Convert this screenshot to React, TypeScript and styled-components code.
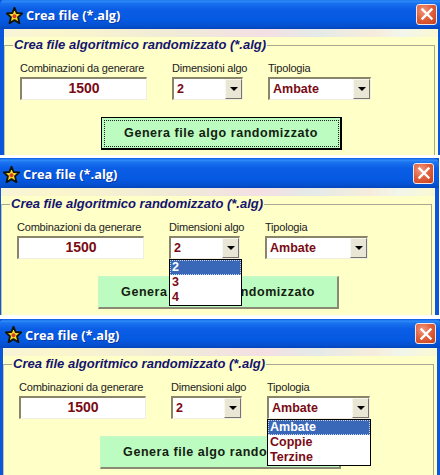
import React from "react";
import styled, { createGlobalStyle } from "styled-components";

const Global = createGlobalStyle`
  html, body { margin: 0; padding: 0; background: #fff; overflow: hidden; }
  body { width: 440px; height: 475px; font-family: "Liberation Sans", Arial, sans-serif; }
`;

const Page = styled.div`
  width: 440px;
  height: 475px;
  overflow: hidden;
`;

const Win = styled.section<{ $left: number; $top: number; $height: number }>`
  box-sizing: border-box;
  width: 442px;
  height: ${(p) => p.$height}px;
  margin: ${(p) => p.$top}px 0 0 ${(p) => p.$left}px;
  display: flex;
  flex-direction: column;
  background: #0a57dc;
`;

const TitleBar = styled.header<{ $h: number }>`
  flex: 0 0 ${(p) => p.$h}px;
  display: flex;
  align-items: center;
  box-sizing: border-box;
  padding: 2px 5px 0 6px;
  border-radius: 6px 6px 0 0;
  background: linear-gradient(
    180deg,
    #0a5ae6 0%,
    #2f8cf6 7%,
    #1a73f0 14%,
    #0a5de4 35%,
    #0559e2 70%,
    #0550cf 90%,
    #0445ba 100%
  );
`;

const StarIcon = styled.svg`
  width: 17px;
  height: 17px;
  flex: none;
`;

const Title = styled.h1`
  margin: 0 0 0 3px;
  flex: 1;
  color: #fff;
  font: bold 12.8px "Open Sans", "Liberation Sans", sans-serif;
  text-shadow: 1px 1px 0 #0a3aa8;
`;

const CloseBtn = styled.div`
  width: 21px;
  height: 21px;
  margin: -2px 0 0 0;
  box-sizing: border-box;
  border: 1px solid #f4e8e4;
  border-radius: 3px;
  background: radial-gradient(circle at 35% 30%, #ee9a80 0%, #e2623e 45%, #c63d1c 100%);
  display: flex;
  align-items: center;
  justify-content: center;
`;

const Body = styled.div`
  flex: 1;
  min-height: 0;
  margin: 0 0 0 4px;
  width: 434px;
  overflow: hidden;
  background: #ffffc8;
`;

const Stripe = styled.div`
  height: 8px;
  background: linear-gradient(
    90deg,
    #f8f4d8 0%,
    #fbf6cc 12%,
    #f0ead8 40%,
    #f4dfe4 60%,
    #e4eae8 72%,
    #f6ecdc 85%,
    #f2f6ec 92%,
    #fbf8d0 100%
  );
`;

const Group = styled.fieldset`
  margin: 0 3px 0 0;
  padding: 0;
  min-width: 0;
  height: 200px;
  border: 1px solid #a8a890;
  border-left-color: #c4c4a8;
`;

const Legend = styled.legend`
  margin-left: 8px;
  padding: 0 1px;
  height: 16px;
  color: #14146e;
  font: italic bold 13px/16px "Liberation Sans", sans-serif;
`;

const Fields = styled.div`
  display: grid;
  grid-template-columns: 127px 71px 103px;
  column-gap: 25px;
  margin: 8px 0 0 15px;
`;

const Field = styled.div`
  position: relative;
  min-width: 0;
`;

const Label = styled.label`
  display: block;
  height: 14px;
  margin-bottom: 2px;
  color: #222;
  font-size: 11px;
  letter-spacing: -0.2px;
  line-height: 14px;
  white-space: nowrap;
`;

const Sunken = styled.div`
  box-sizing: border-box;
  height: 23px;
  background: #fff;
  border-style: solid;
  border-width: 2px 1px 1px 2px;
  border-color: #8a8468 #efeee0 #efeee0 #8a8468;
`;

const NumberBox = styled(Sunken)`
  color: #7a0a14;
  font-size: 14px;
  font-weight: bold;
  line-height: 19px;
  text-align: center;
`;

const Combo = styled(Sunken)`
  display: flex;
  align-items: center;
  padding-left: 3px;
`;

const ComboText = styled.span`
  flex: 1;
  color: #7a0a14;
  font-size: 12.5px;
  font-weight: bold;
`;

const ArrowBtn = styled.div`
  box-sizing: border-box;
  flex: none;
  width: 17px;
  height: 20px;
  background: #e9e6d6;
  border-style: solid;
  border-width: 1px;
  border-color: #f8f8f0 #77756a #77756a #f8f8f0;
  display: flex;
  align-items: center;
  justify-content: center;
  &::after {
    content: "";
    border-style: solid;
    border-width: 4px 4px 0;
    border-color: #000 transparent transparent;
  }
`;

const Popup = styled.ul<{ $width: number }>`
  position: absolute;
  top: 39px;
  left: 0;
  z-index: 2;
  box-sizing: border-box;
  width: ${(p) => p.$width}px;
  height: 47px;
  margin: 0;
  padding: 0;
  list-style: none;
  background: #fff;
  border: 1px solid #000;
`;

const PopupItem = styled.li<{ $active?: boolean }>`
  box-sizing: border-box;
  height: 15px;
  padding-left: 2px;
  color: ${(p) => (p.$active ? "#fff" : "#7a0a14")};
  background: ${(p) => (p.$active ? "#3a68b8" : "transparent")};
  outline: ${(p) => (p.$active ? "1px dotted #c8d4ec" : "none")};
  outline-offset: -1px;
  font-size: 12.5px;
  font-weight: bold;
  line-height: 15px;
`;

const ActionBtn = styled.button<{ $focused?: boolean }>`
  display: block;
  box-sizing: border-box;
  width: 241px;
  height: 33px;
  margin: 17px 0 0 96px;
  padding: 0;
  background: #bcfcc0;
  color: #142010;
  font: bold 12.5px "Liberation Sans", sans-serif;
  letter-spacing: 0.55px;
  border-style: solid;
  border-width: 1px 2px 2px 1px;
  border-color: ${(p) =>
    p.$focused ? "#000" : "#c8f8c8 #8a8a74 #8a8a74 #c8f8c8"};
  outline: ${(p) => (p.$focused ? "1px dotted #222" : "none")};
  outline-offset: -4px;
`;

const Star = () => (
  <StarIcon viewBox="0 0 24 24">
    <polygon
      points="12,1 15,8.5 23,9 17,14.5 19,23 12,18.5 5,23 7,14.5 1,9 9,8.5"
      fill="#f7dc2a"
      stroke="#14140c"
      strokeWidth="2.6"
      strokeLinejoin="round"
    />
    <circle cx="12" cy="13" r="2.8" fill="#d8402a" />
  </StarIcon>
);

const CloseIcon = () => (
  <svg width="14" height="14" viewBox="0 0 14 14">
    <path d="M2.5 2.5 L11.5 11.5 M11.5 2.5 L2.5 11.5" stroke="#fff" strokeWidth="2.4" strokeLinecap="square" />
  </svg>
);

type Open = "dim" | "type" | null;

type WindowProps = {
  left: number;
  top: number;
  height: number;
  titleH: number;
  open: Open;
  focused?: boolean;
};

const DIMS = ["2", "3", "4"];
const TYPES = ["Ambate", "Coppie", "Terzine"];

const Dialog = ({ left, top, height, titleH, open, focused }: WindowProps) => (
  <Win $left={left} $top={top} $height={height}>
    <TitleBar $h={titleH}>
      <Star />
      <Title>Crea file (*.alg)</Title>
      <CloseBtn>
        <CloseIcon />
      </CloseBtn>
    </TitleBar>
    <Body>
      <Stripe />
      <Group>
        <Legend>Crea file algoritmico randomizzato (*.alg)</Legend>
        <Fields>
          <Field>
            <Label>Combinazioni da generare</Label>
            <NumberBox>1500</NumberBox>
          </Field>
          <Field>
            <Label>Dimensioni algo</Label>
            <Combo>
              <ComboText>2</ComboText>
              <ArrowBtn />
            </Combo>
            {open === "dim" && (
              <Popup $width={73}>
                {DIMS.map((d, i) => (
                  <PopupItem key={d} $active={i === 0}>
                    {d}
                  </PopupItem>
                ))}
              </Popup>
            )}
          </Field>
          <Field>
            <Label>Tipologia</Label>
            <Combo>
              <ComboText>Ambate</ComboText>
              <ArrowBtn />
            </Combo>
            {open === "type" && (
              <Popup $width={104}>
                {TYPES.map((d, i) => (
                  <PopupItem key={d} $active={i === 0}>
                    {d}
                  </PopupItem>
                ))}
              </Popup>
            )}
          </Field>
        </Fields>
        <ActionBtn $focused={focused}>Genera file algo randomizzato</ActionBtn>
      </Group>
    </Body>
  </Win>
);

export default function App() {
  return (
    <Page>
      <Global />
      <Dialog left={0} top={-1} height={156} titleH={30} open={null} focused />
      <Dialog left={-3} top={3} height={157} titleH={30} open="dim" />
      <Dialog left={-1} top={4} height={156} titleH={29} open="type" />
    </Page>
  );
}
